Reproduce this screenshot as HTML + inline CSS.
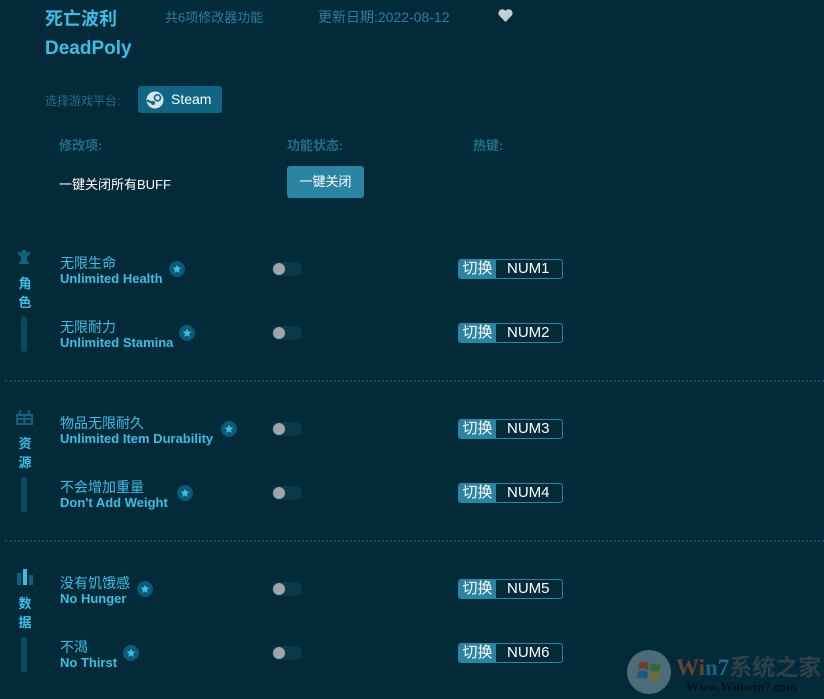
<!DOCTYPE html>
<html><head><meta charset="utf-8"><style>
*{margin:0;padding:0;box-sizing:border-box}
body{width:824px;height:699px;background:#022a38;font-family:"Liberation Sans","Noto Sans CJK SC",sans-serif;position:relative;overflow:hidden;color:#3bbfe6}
.a{position:absolute;white-space:nowrap}
.cn{font-size:14px;color:#3bbfe6}
.en{font-size:13px;font-weight:bold;color:#3bbfe6}
.star{position:absolute;width:16px;height:16px;border-radius:50%;background:#0b5a78}
.star svg{position:absolute;left:3px;top:3px}
.tg{position:absolute;width:30px;height:14px;border-radius:7px;background:#0b3a4b}
.tg:after{content:"";position:absolute;left:1px;top:1px;width:12px;height:12px;border-radius:50%;background:#9ba5aa}
.hk{position:absolute;width:105px;height:20px;border:1px solid #2a86a5;border-radius:3px;overflow:hidden;font-size:15px;color:#fff}
.hk span{position:absolute;top:0;height:18px;line-height:18px}
.hk .l{left:0;width:37px;background:#2a84a2;text-align:center}
.hk .r{left:37px;width:68px;padding-left:11px}
.side{position:absolute;left:17px;width:16px;text-align:center;font-size:13px;font-weight:bold;color:#3bbfe6;line-height:19px}
.bar{position:absolute;left:21px;width:6px;height:36px;border-radius:3px;background:#0b4b62}
.div{position:absolute;left:5px;width:819px;border-top:2px dotted #0d4a5e}
</style></head><body>
<div class="a" style="left:45px;top:5px;font-size:18px;font-weight:bold;color:#3bbfe6">死亡波利</div>
<div class="a" style="left:165px;top:7px;font-size:13px;color:#2a7f9e">共6项修改器功能</div>
<div class="a" style="left:318px;top:7px;font-size:14px;color:#2a7f9e">更新日期:2022-08-12</div>
<svg class="a" style="left:498px;top:9px" width="15" height="13" viewBox="0 0 15 13"><path d="M7.5 13 L1.2 6.5 A3.6 3.6 0 0 1 7.5 1.8 A3.6 3.6 0 0 1 13.8 6.5 Z" fill="#c3cdd2"/></svg>
<div class="a" style="left:45px;top:38px;font-size:19px;font-weight:bold;color:#3bbfe6">DeadPoly</div>
<div class="a" style="left:45px;top:92px;font-size:12px;color:#1e6f8a">选择游戏平台:</div>
<div class="a" style="left:138px;top:86px;width:84px;height:27px;background:#0e6584;border-radius:3px"></div>
<svg class="a" style="left:146px;top:91px" width="18" height="18" viewBox="0 0 18 18"><circle cx="9" cy="9" r="8.5" fill="#d8e3e8"/><circle cx="11.5" cy="6.8" r="3" fill="none" stroke="#0e6584" stroke-width="1.6"/><path d="M1 9.5 L7 12" stroke="#0e6584" stroke-width="2.2"/><circle cx="7" cy="12" r="2" fill="#0e6584"/></svg>
<div class="a" style="left:171px;top:91px;font-size:14px;color:#fff">Steam</div>
<div class="a" style="left:59px;top:135px;font-size:13px;font-weight:bold;color:#1e6f8a">修改项:</div>
<div class="a" style="left:287px;top:135px;font-size:13px;font-weight:bold;color:#1e6f8a">功能状态:</div>
<div class="a" style="left:473px;top:135px;font-size:13px;font-weight:bold;color:#1e6f8a">热键:</div>
<div class="a" style="left:59px;top:174px;font-size:13px;color:#fff">一键关闭所有BUFF</div>
<div class="a" style="left:287px;top:166px;width:77px;height:32px;background:#2a84a2;border-radius:3px;color:#fff;font-size:13px;line-height:32px;text-align:center">一键关闭</div>

<svg class="a" style="left:16px;top:249px" width="16" height="16" viewBox="0 0 16 16"><path d="M2 1 L4 4 L5 4 Q5 1 8 1 Q11 1 11 4 L12 4 L14 1 L14 5 L11 8 L11 12 L14 15 L2 15 L5 12 L5 8 L2 5 Z" fill="#12607d"/></svg>
<div class="side" style="top:274px">角<br>色</div>
<div class="bar" style="top:316px"></div>
<div class="div" style="top:380px"></div>
<svg class="a" style="left:16px;top:409px" width="17" height="16" viewBox="0 0 17 16"><path d="M1 6 H16 V15 H1 Z M3 6 L5 1 M14 6 L12 1 M8.5 6 V15 M1 10 H16" fill="none" stroke="#12607d" stroke-width="2"/></svg>
<div class="side" style="top:434px">资<br>源</div>
<div class="bar" style="top:477px"></div>
<div class="div" style="top:540px"></div>
<svg class="a" style="left:16px;top:569px" width="17" height="16" viewBox="0 0 17 16"><rect x="1" y="4" width="4" height="12" fill="#12607d"/><rect x="7" y="0" width="4" height="16" fill="#3bbfe6"/><rect x="13" y="6" width="4" height="10" fill="#12607d"/></svg>
<div class="side" style="top:594px">数<br>据</div>
<div class="bar" style="top:637px"></div>

<div class="a cn" style="left:60px;top:253px">无限生命</div><div class="a en" style="left:60px;top:271px">Unlimited Health</div>
<div class="a cn" style="left:60px;top:317px">无限耐力</div><div class="a en" style="left:60px;top:335px">Unlimited Stamina</div>
<div class="a cn" style="left:60px;top:413px">物品无限耐久</div><div class="a en" style="left:60px;top:431px">Unlimited Item Durability</div>
<div class="a cn" style="left:60px;top:477px">不会增加重量</div><div class="a en" style="left:60px;top:495px">Don't Add Weight</div>
<div class="a cn" style="left:60px;top:573px">没有饥饿感</div><div class="a en" style="left:60px;top:591px">No Hunger</div>
<div class="a cn" style="left:60px;top:637px">不渴</div><div class="a en" style="left:60px;top:655px">No Thirst</div>

<div class="star" style="left:169px;top:261px"><svg width="10" height="10" viewBox="0 0 10 10"><path d="M5 0.5 L6.3 3.5 L9.5 3.7 L7 5.8 L7.8 9 L5 7.2 L2.2 9 L3 5.8 L0.5 3.7 L3.7 3.5 Z" fill="#3bbfe6"/></svg></div>
<div class="star" style="left:179px;top:325px"><svg width="10" height="10" viewBox="0 0 10 10"><path d="M5 0.5 L6.3 3.5 L9.5 3.7 L7 5.8 L7.8 9 L5 7.2 L2.2 9 L3 5.8 L0.5 3.7 L3.7 3.5 Z" fill="#3bbfe6"/></svg></div>
<div class="star" style="left:221px;top:421px"><svg width="10" height="10" viewBox="0 0 10 10"><path d="M5 0.5 L6.3 3.5 L9.5 3.7 L7 5.8 L7.8 9 L5 7.2 L2.2 9 L3 5.8 L0.5 3.7 L3.7 3.5 Z" fill="#3bbfe6"/></svg></div>
<div class="star" style="left:177px;top:485px"><svg width="10" height="10" viewBox="0 0 10 10"><path d="M5 0.5 L6.3 3.5 L9.5 3.7 L7 5.8 L7.8 9 L5 7.2 L2.2 9 L3 5.8 L0.5 3.7 L3.7 3.5 Z" fill="#3bbfe6"/></svg></div>
<div class="star" style="left:137px;top:581px"><svg width="10" height="10" viewBox="0 0 10 10"><path d="M5 0.5 L6.3 3.5 L9.5 3.7 L7 5.8 L7.8 9 L5 7.2 L2.2 9 L3 5.8 L0.5 3.7 L3.7 3.5 Z" fill="#3bbfe6"/></svg></div>
<div class="star" style="left:123px;top:645px"><svg width="10" height="10" viewBox="0 0 10 10"><path d="M5 0.5 L6.3 3.5 L9.5 3.7 L7 5.8 L7.8 9 L5 7.2 L2.2 9 L3 5.8 L0.5 3.7 L3.7 3.5 Z" fill="#3bbfe6"/></svg></div>

<div class="tg" style="left:272px;top:262px"></div>
<div class="tg" style="left:272px;top:326px"></div>
<div class="tg" style="left:272px;top:422px"></div>
<div class="tg" style="left:272px;top:486px"></div>
<div class="tg" style="left:272px;top:582px"></div>
<div class="tg" style="left:272px;top:646px"></div>

<div class="hk" style="left:458px;top:259px"><span class="l">切换</span><span class="r">NUM1</span></div>
<div class="hk" style="left:458px;top:323px"><span class="l">切换</span><span class="r">NUM2</span></div>
<div class="hk" style="left:458px;top:419px"><span class="l">切换</span><span class="r">NUM3</span></div>
<div class="hk" style="left:458px;top:483px"><span class="l">切换</span><span class="r">NUM4</span></div>
<div class="hk" style="left:458px;top:579px"><span class="l">切换</span><span class="r">NUM5</span></div>
<div class="hk" style="left:458px;top:643px"><span class="l">切换</span><span class="r">NUM6</span></div>

<div style="opacity:.55">
<div class="a" style="left:627px;top:650px;width:44px;height:44px;border-radius:50%;background:#8aa3ab"></div>
<svg class="a" style="left:637px;top:658px" width="26" height="26" viewBox="0 0 26 26"><path d="M2 5 Q7 2 12 5 L11 12 Q6 9 1 12 Z" fill="#c0552a"/><path d="M14 5 Q19 8 24 5 L23 12 Q18 15 13 12 Z" fill="#5f9a2a"/><path d="M1 14 Q6 11 11 14 L10 21 Q5 18 0 21 Z" fill="#2a7dba"/><path d="M13 14 Q18 17 23 14 L22 21 Q17 24 12 21 Z" fill="#d0a82a"/></svg>
<div class="a" style="left:676px;top:648px;font-size:23px;font-weight:bold;font-family:'Liberation Serif',serif;color:#c0552a">Wi<span style="color:#2a8fba">n</span><span style="color:#2aa0d5">7</span><span style="color:#555;font-family:'Noto Sans CJK SC',sans-serif">系统之家</span></div>
<div class="a" style="left:686px;top:679px;font-size:13px;font-weight:bold;font-family:'Liberation Serif',serif;color:#000">Www.Winwin7.com</div>
</div>
</body></html>
